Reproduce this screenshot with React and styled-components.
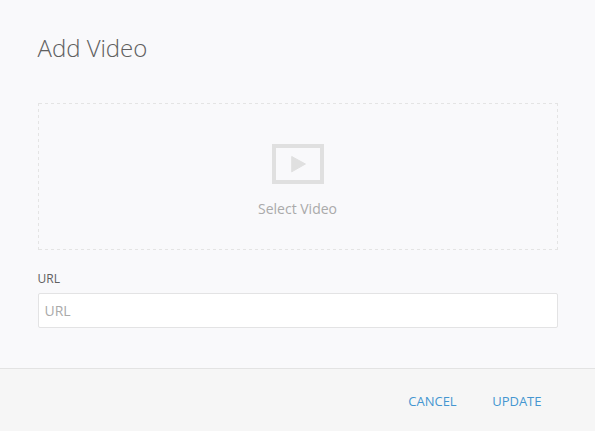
import React from "react";
import styled, { createGlobalStyle } from "styled-components";

const Global = createGlobalStyle`
  * { box-sizing: border-box; }
  body { margin: 0; background: #f9f9fb; font-family: "Open Sans", sans-serif; -webkit-font-smoothing: antialiased; }
`;
const Dialog = styled.form`
  display: flex; flex-direction: column; width: 595px; height: 431px;
`;
const Body = styled.div`
  flex: 1; padding: 31px 37px 0 38px;
`;
const Title = styled.h1`
  margin: 0; font-size: 24px; line-height: 34px; font-weight: 300; color: #606060;
  letter-spacing: -0.05px; text-indent: -0.4px;
`;
const DropZone = styled.div`
  margin-top: 38px; height: 147px; padding-top: 41px;
  display: flex; flex-direction: column; align-items: center;
  color: #aaa; font-size: 14px; line-height: 20px;
  --dash-x: transparent 0 1px, #e4e4e4 1px 4px, transparent 4px 6px;
  --dash-y: #e4e4e4 0 3px, transparent 3px 6px;
  background:
    repeating-linear-gradient(90deg, var(--dash-x)) 0 0 / 100% 1px no-repeat,
    repeating-linear-gradient(90deg, var(--dash-x)) 0 100% / 100% 1px no-repeat,
    repeating-linear-gradient(180deg, var(--dash-y)) 0 0 / 1px 100% no-repeat,
    repeating-linear-gradient(180deg, var(--dash-y)) 100% 0 / 1px 100% no-repeat;
`;
const Caption = styled.span`
  margin-right: 1px;
`;
const VideoIcon = styled.svg`
  display: block; width: 52px; height: 40px; margin-bottom: 15px;
`;
const Label = styled.label`
  display: block; margin-top: 20px; font-size: 12px; line-height: 18px; color: #606060;
  text-indent: -0.5px;
`;
const Input = styled.input`
  display: block; width: 100%; height: 35px; margin-top: 5px; padding: 0 5.5px;
  border: 1px solid #e3e3e4; border-radius: 2px; background: #fff;
  font: 14px "Open Sans", sans-serif; color: #606060; outline: none;
  &::placeholder { color: #aaa; opacity: 1; }
`;
const Footer = styled.footer`
  height: 63px; border-top: 1px solid #e3e3e3; background: #f6f6f6;
  display: flex; justify-content: flex-end; align-items: center; gap: 35.5px; padding: 2px 53.5px 0 0;
`;
const Action = styled.button`
  border: 0; padding: 0; background: none; color: #4596d1;
  font: 13px/20px "Open Sans", sans-serif;
`;

export default function App() {
  return (
    <Dialog>
      <Global />
      <Body>
        <Title>Add Video</Title>
        <DropZone>
          <VideoIcon viewBox="0 0 52 40">
            <rect x="2" y="2" width="48" height="36" fill="none" stroke="#e0e0e0" strokeWidth="4" />
            <path d="M19.7 12.5v15.3L33.4 20z" fill="#e0e0e0" stroke="#e0e0e0" strokeLinejoin="round" />
          </VideoIcon>
          <Caption>Select Video</Caption>
        </DropZone>
        <Label htmlFor="url">URL</Label>
        <Input id="url" placeholder="URL" />
      </Body>
      <Footer>
        <Action type="button">CANCEL</Action>
        <Action type="button">UPDATE</Action>
      </Footer>
    </Dialog>
  );
}
